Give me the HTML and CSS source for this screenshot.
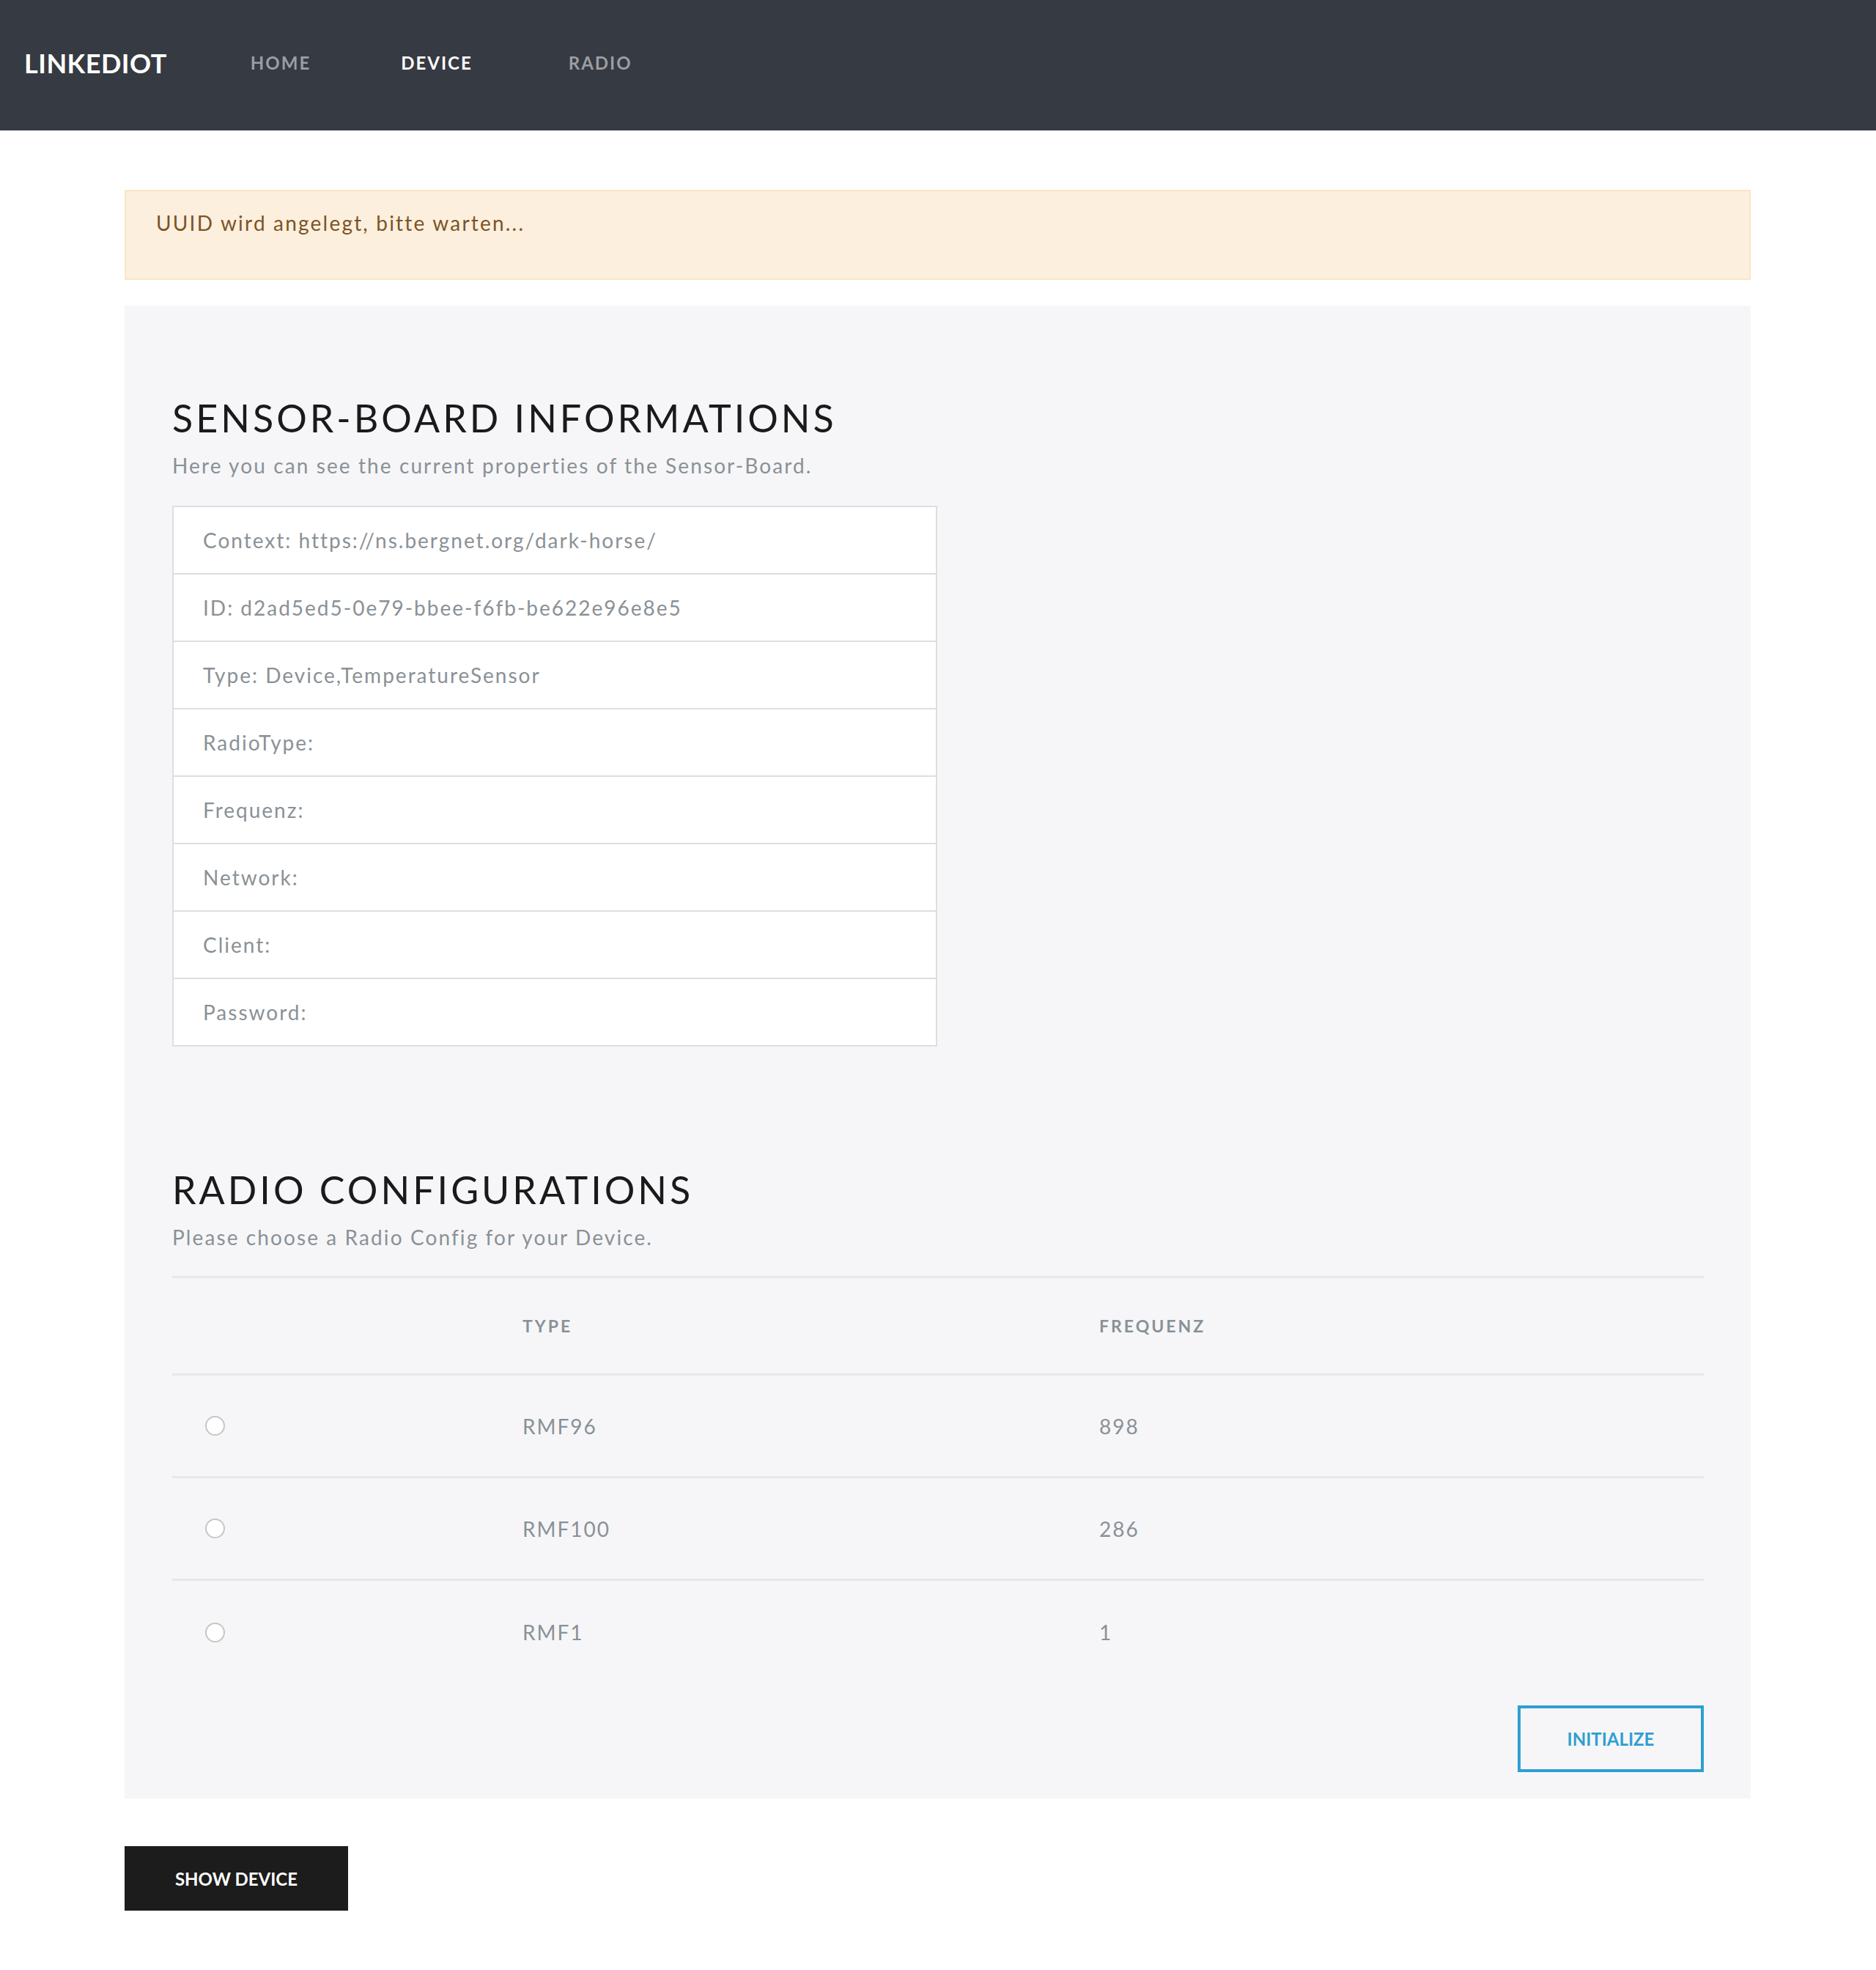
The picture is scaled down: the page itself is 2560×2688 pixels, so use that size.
FILE: index.html
```html
<!DOCTYPE html>
<html lang="de">
<head>
<meta charset="utf-8">
<title>LinkedIoT - Device</title>
<link rel="stylesheet" href="styles.css">
</head>
<body>
<header class="navbar">
  <a class="brand" href="#">LINKEDIOT</a>
  <nav class="nav">
    <a class="nav-link" href="#">HOME</a>
    <a class="nav-link active" href="#">DEVICE</a>
    <a class="nav-link" href="#">RADIO</a>
  </nav>
</header>
<main class="container">
  <div class="alert">UUID wird angelegt, bitte warten...</div>
  <section class="panel">
    <h2 class="section-title first">SENSOR-BOARD INFORMATIONS</h2>
    <p class="section-sub">Here you can see the current properties of the Sensor-Board.</p>
    <ul class="props">
      <li>Context: https://ns.bergnet.org/dark-horse/</li>
      <li>ID: d2ad5ed5-0e79-bbee-f6fb-be622e96e8e5</li>
      <li>Type: Device,TemperatureSensor</li>
      <li>RadioType:</li>
      <li>Frequenz:</li>
      <li>Network:</li>
      <li>Client:</li>
      <li>Password:</li>
    </ul>
    <h2 class="section-title second">RADIO CONFIGURATIONS</h2>
    <p class="section-sub">Please choose a Radio Config for your Device.</p>
    <div class="table">
      <div class="trow thead">
        <div class="cell"></div>
        <div class="cell">TYPE</div>
        <div class="cell">FREQUENZ</div>
      </div>
      <div class="trow">
        <div class="cell"><span class="radio"></span></div>
        <div class="cell">RMF96</div>
        <div class="cell">898</div>
      </div>
      <div class="trow">
        <div class="cell"><span class="radio"></span></div>
        <div class="cell">RMF100</div>
        <div class="cell">286</div>
      </div>
      <div class="trow last">
        <div class="cell"><span class="radio"></span></div>
        <div class="cell">RMF1</div>
        <div class="cell">1</div>
      </div>
    </div>
    <div class="actions">
      <button class="btn-outline" type="button">INITIALIZE</button>
    </div>
  </section>
  <button class="btn-dark" type="button">SHOW DEVICE</button>
</main>
</body>
</html>
```
FILE: styles.css
```css
* { box-sizing: border-box; }
html, body { margin: 0; padding: 0; background: #ffffff; }
body {
  font-family: "Lato", "Open Sans", sans-serif;
  color: #8a9196;
}
.navbar {
  height: 178px;
  background: #363a42;
  display: flex;
  align-items: center;
  padding-left: 33px;
  padding-bottom: 7px;
}
.brand {
  color: #ffffff;
  text-decoration: none;
  font-size: 36px;
  font-weight: 700;
  letter-spacing: 0.5px;
  margin-right: 114px;
}
.nav { display: flex; align-items: center; }
.nav-link {
  color: #9b9ea3;
  text-decoration: none;
  font-size: 24px;
  font-weight: 700;
  letter-spacing: 2px;
  margin-right: 123px;
}
.nav-link.active { color: #ffffff; margin-right: 131px; }
.container {
  margin: 0 171px 0 170px;
  padding-top: 81px;
  padding-bottom: 80px;
}
.alert {
  height: 123px;
  background: #fcefdd;
  border: 2px solid #fae5c8;
  color: #7b5427;
  font-size: 28px;
  letter-spacing: 2.2px;
  padding: 26px 0 0 41px;
}
.panel {
  margin-top: 35px;
  background: #f6f6f8;
  padding: 1px 64px 36px 65px;
}
.section-title {
  margin: 0;
  color: #1a1a1a;
  font-size: 52px;
  font-weight: 400;
  letter-spacing: 4px;
  line-height: 60px;
}
.section-title.first { margin-top: 122px; }
.section-title.second { margin-top: 165px; }
.section-sub {
  margin: 15px 0 0 0;
  font-size: 28px;
  letter-spacing: 2.1px;
  line-height: 40px;
}
.props {
  list-style: none;
  margin: 35px 0 0 0;
  padding: 0;
  width: 1044px;
  border: 2px solid #dedede;
  background: #ffffff;
}
.props li {
  height: 92px;
  display: flex;
  align-items: center;
  padding-left: 40px;
  font-size: 28px;
  letter-spacing: 2px;
  border-top: 2px solid #dedede;
}
.props li:first-child { border-top: 0; height: 90px; }
.table {
  margin-top: 33px;
  border-top: 3px solid #e8e8eb;
}
.trow {
  display: grid;
  grid-template-columns: 478px 787px 1fr;
  height: 140px;
  align-items: center;
  border-bottom: 3px solid #e8e8eb;
  font-size: 28px;
  letter-spacing: 2px;
}
.trow.thead {
  height: 133px;
  font-size: 23px;
  font-weight: 700;
  letter-spacing: 3px;
}
.trow.last { border-bottom: 0; }
.cell { display: flex; align-items: center; }
.radio {
  display: inline-block;
  width: 27px;
  height: 27px;
  margin-left: 45px;
  border-radius: 50%;
  border: 2px solid #c6c6c6;
  background: #ffffff;
}
.actions {
  display: flex;
  justify-content: flex-end;
  margin-top: 30px;
}
.btn-outline {
  width: 254px;
  height: 91px;
  border: 4px solid #2e9fd1;
  background: transparent;
  color: #2e9fd1;
  font-family: "Lato", sans-serif;
  font-size: 24px;
  font-weight: 700;
}
.btn-dark {
  margin-top: 65px;
  width: 305px;
  height: 88px;
  border: 0;
  background: #1c1c1c;
  color: #ffffff;
  font-family: "Lato", sans-serif;
  font-size: 24px;
  font-weight: 700;
}
```
